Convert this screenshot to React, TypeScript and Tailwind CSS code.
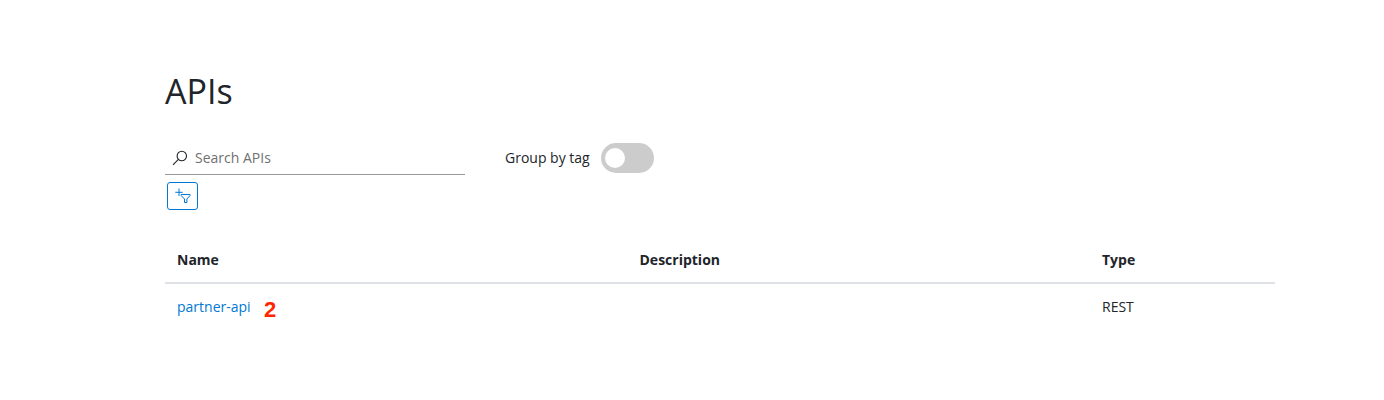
import React from "react";

function SearchIcon() {
  return (
    <svg width="16" height="16" viewBox="0 0 16 16" fill="none" stroke="#212529" strokeWidth="1.1">
      <circle cx="9.8" cy="6" r="4.7" />
      <path d="M6.4 9.4 L1 14.8" />
    </svg>
  );
}

function AddFilterIcon() {
  return (
    <svg width="16" height="16" viewBox="0 0 16 16" fill="none" stroke="#0078d4" strokeWidth="1">
      <path d="M4 0.5 V8 M0.3 4.3 H7.7" />
      <path d="M6.2 6.5 H15 V7.6 L11.9 11 V14.5 H9.5 V11 L6.2 7.6 Z" />
    </svg>
  );
}

function Toggle() {
  return (
    <button type="button" role="switch" aria-checked="false" className="ml-[11px] flex h-[30px] w-[53px] items-center rounded-full bg-[#cccccc] pl-1">
      <span className="size-5 rounded-full bg-white" />
    </button>
  );
}

const apis = [{ name: "partner-api", marker: "2", description: "", type: "REST" }];

export default function App() {
  return (
    <main className="h-[400px] bg-white pt-[70px] pl-[165px] font-['Open_Sans',sans-serif] text-sm leading-[21px] text-[#212529]">
      <div className="w-[1110px]">
        <h1 className="h-[72px] text-[34px] leading-[42px]">APIs</h1>
        <div className="flex">
          <label className="flex h-[33px] w-[300px] items-center border-b border-[#999999] pl-[7px]">
            <SearchIcon />
            <input
              type="text"
              placeholder="Search APIs"
              className="ml-[7px] w-60 pb-px outline-none placeholder:text-[#707070]"
            />
          </label>
          <div className="ml-10 flex h-8 items-center">
            <span className="pb-0.5">Group by tag</span>
            <Toggle />
          </div>
        </div>
        <button type="button" aria-label="Add filter" className="mt-[7px] ml-[2px] flex h-7 w-[31px] items-center justify-center rounded-[3px] border border-[#0078d4]">
          <AddFilterIcon />
        </button>
        <div className="mt-[27px]">
          <div className="grid h-[47px] grid-cols-[5fr_5fr_2fr] border-b-2 border-[#dee2e6] pt-3 font-bold">
            <span className="pl-3">Name</span>
            <span className="pl-3">Description</span>
            <span className="pl-3">Type</span>
          </div>
          {apis.map((api) => (
            <div key={api.name} className="grid grid-cols-[5fr_5fr_2fr] pt-3">
              <div className="flex pl-3">
                <a href="#" className="text-[#0078d4]">{api.name}</a>
                <span className="mt-[3px] ml-[13.5px] font-['Liberation_Sans',sans-serif] text-[22px] leading-[21px] font-bold text-[#ff2600]">{api.marker}</span>
              </div>
              <span className="pl-3">{api.description}</span>
              <span className="pl-3">{api.type}</span>
            </div>
          ))}
        </div>
      </div>
    </main>
  );
}
